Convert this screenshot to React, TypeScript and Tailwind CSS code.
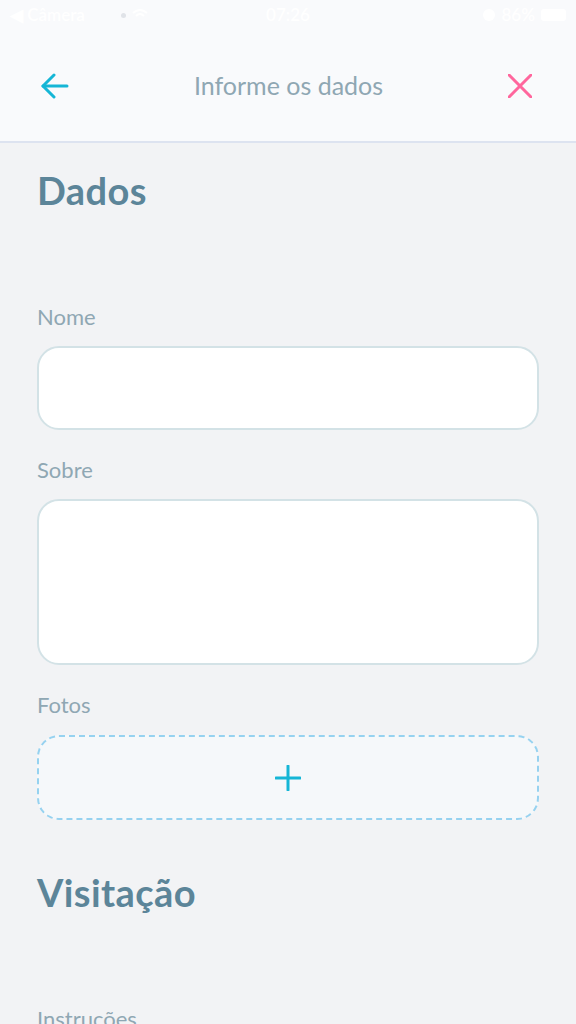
import React from "react";

const font = { fontFamily: "Lato, 'Noto Sans', sans-serif" };

function Label({ children }: { children: React.ReactNode }) {
  return <div className="text-[22px] leading-none text-[#8fa7b3]">{children}</div>;
}

export default function App() {
  return (
    <div className="min-h-[1024px] w-[576px] overflow-hidden bg-[#f2f3f5]" style={font}>
      <header className="bg-[#f9fafc] border-b-2 border-[#dde3f0]">
        <div className="h-[30px] relative flex items-center px-[10px] text-[17px] text-white font-semibold">
          <span>◀ Câmera</span>
          <span className="ml-[36px] flex items-center gap-[6px]">
            <span className="w-[5px] h-[5px] rounded-full bg-[#e0e3e8]" />
            <svg width="16" height="12" viewBox="0 0 16 12"><path d="M1 4 Q8 -2 15 4 M4 7 Q8 3 12 7" stroke="white" strokeWidth="2" fill="none" /></svg>
          </span>
          <span className="absolute left-1/2 -translate-x-1/2">07:26</span>
          <span className="ml-auto flex items-center gap-[6px]">
            <span className="w-[12px] h-[12px] rounded-full bg-white" />
            <span>86%</span>
            <span className="w-[25px] h-[12px] rounded-[3px] bg-white" />
          </span>
        </div>
        <div className="h-[111px] flex items-center justify-between pl-[41px] pr-[44px]">
          <svg width="28" height="26" viewBox="0 0 28 26" fill="none" stroke="#15b6d6" strokeWidth="3" strokeLinecap="round" strokeLinejoin="round">
            <path d="M2 13 H26" />
            <path d="M13 2 L2 13 L13 24" />
          </svg>
          <div className="text-[25px] text-[#8fa7b3] leading-none">Informe os dados</div>
          <svg width="24" height="24" viewBox="0 0 24 24" fill="none" stroke="#ff669d" strokeWidth="3" strokeLinecap="round">
            <path d="M1 1 L23 23" />
            <path d="M23 1 L1 23" />
          </svg>
        </div>
      </header>
      <main className="px-[37px] pt-[28px]">
        <h1 className="text-[38px] leading-none font-bold tracking-[0.4px] text-[#5c8599]">Dados</h1>
        <div className="mt-[97px]">
          <Label>Nome</Label>
          <div className="mt-[18px] h-[84px] w-[502px] rounded-[22px] border-2 border-[#d3e2e6] bg-white" />
        </div>
        <div className="mt-[29px]">
          <Label>Sobre</Label>
          <div className="mt-[18px] h-[166px] w-[502px] rounded-[22px] border-2 border-[#d3e2e6] bg-white" />
        </div>
        <div className="mt-[29px]">
          <Label>Fotos</Label>
          <div className="mt-[19px] h-[85px] w-[502px] rounded-[22px] border-2 border-dashed border-[#96d2f0] bg-[#f5f8fa] flex items-center justify-center">
            <svg width="26" height="26" viewBox="0 0 26 26" fill="none" stroke="#15b6d6" strokeWidth="3" strokeLinecap="round">
              <path d="M13 1 V25" />
              <path d="M1 13 H25" />
            </svg>
          </div>
        </div>
        <h1 className="mt-[53px] text-[38px] leading-none font-bold tracking-[0.4px] text-[#5c8599]">Visitação</h1>
        <div className="mt-[97px]">
          <Label>Instruções</Label>
        </div>
      </main>
    </div>
  );
}
